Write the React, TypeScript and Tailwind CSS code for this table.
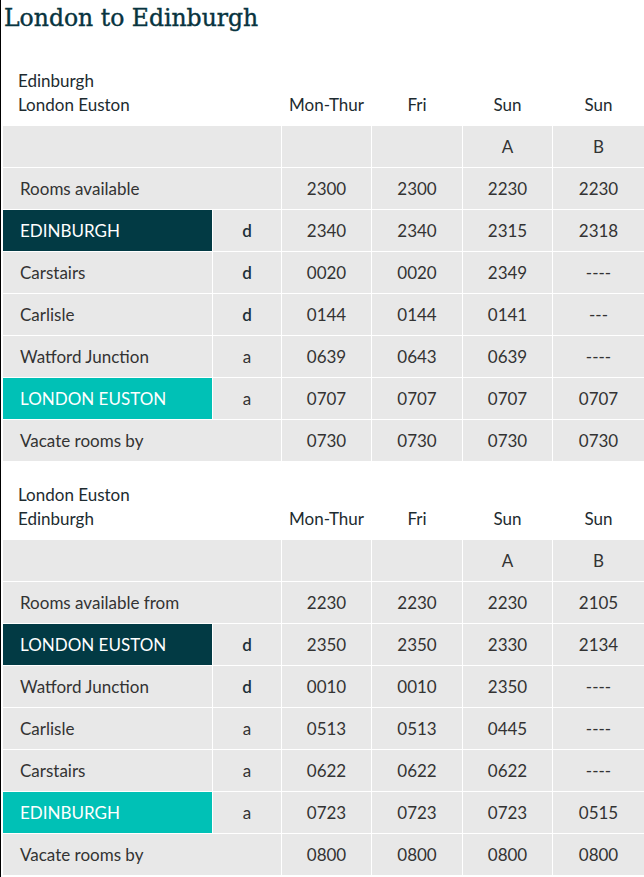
import React from "react";

type Row = {
  name: string;
  kind?: "dark" | "teal";
  code?: string;
  times: string[];
};

const SANS = "font-['Lato','Open_Sans',sans-serif]";

const northbound: Row[] = [
  { name: "Rooms available", times: ["2300", "2300", "2230", "2230"] },
  { name: "EDINBURGH", kind: "dark", code: "d", times: ["2340", "2340", "2315", "2318"] },
  { name: "Carstairs", code: "d", times: ["0020", "0020", "2349", "----"] },
  { name: "Carlisle", code: "d", times: ["0144", "0144", "0141", "---"] },
  { name: "Watford Junction", code: "a", times: ["0639", "0643", "0639", "----"] },
  { name: "LONDON EUSTON", kind: "teal", code: "a", times: ["0707", "0707", "0707", "0707"] },
  { name: "Vacate rooms by", times: ["0730", "0730", "0730", "0730"] },
];

const southbound: Row[] = [
  { name: "Rooms available from", times: ["2230", "2230", "2230", "2105"] },
  { name: "LONDON EUSTON", kind: "dark", code: "d", times: ["2350", "2350", "2330", "2134"] },
  { name: "Watford Junction", code: "d", times: ["0010", "0010", "2350", "----"] },
  { name: "Carlisle", code: "a", times: ["0513", "0513", "0445", "----"] },
  { name: "Carstairs", code: "a", times: ["0622", "0622", "0622", "----"] },
  { name: "EDINBURGH", kind: "teal", code: "a", times: ["0723", "0723", "0723", "0515"] },
  { name: "Vacate rooms by", times: ["0800", "0800", "0800", "0800"] },
];

const days = ["Mon-Thur", "Fri", "Sun", "Sun"];

function Timetable({ from, to, rows }: { from: string; to: string; rows: Row[] }) {
  return (
    <div className={`grid grid-cols-[209px_68px_89px_90px_89px_1fr] gap-px bg-white text-[17px] text-[#333] ${SANS}`}>
      {/* header */}
      <div className="col-span-2 pl-[15px] pb-2 leading-[24px] text-[#1d2b30]">
        <div>{from}</div>
        <div>{to}</div>
      </div>
      {days.map((d, i) => (
        <div key={i} className="flex items-end justify-center pb-2 leading-[24px] text-[#1d2b30]">
          {d}
        </div>
      ))}

      {/* A / B row */}
      <div className="col-span-2 h-[41px] bg-[#e8e8e8]" />
      <div className="bg-[#e8e8e8]" />
      <div className="bg-[#e8e8e8]" />
      <div className="flex items-center justify-center bg-[#e8e8e8]">A</div>
      <div className="flex items-center justify-center bg-[#e8e8e8]">B</div>

      {rows.map((r, i) => (
        <React.Fragment key={i}>
          {r.code ? (
            <>
              <div
                className={
                  r.kind === "dark"
                    ? "flex h-[41px] items-center bg-[#023a44] pl-[17px] text-white"
                    : r.kind === "teal"
                    ? "flex h-[41px] items-center bg-[#00c1b6] pl-[17px] text-white"
                    : "flex h-[41px] items-center bg-[#e8e8e8] pl-[17px]"
                }
              >
                {r.name}
              </div>
              <div
                className={
                  r.code === "d"
                    ? "flex items-center justify-center bg-[#e8e8e8] font-semibold text-[#1d3038]"
                    : "flex items-center justify-center bg-[#e8e8e8]"
                }
              >
                {r.code}
              </div>
            </>
          ) : (
            <div className="col-span-2 flex h-[41px] items-center bg-[#e8e8e8] pl-[17px]">{r.name}</div>
          )}
          {r.times.map((t, j) => (
            <div key={j} className="flex items-center justify-center bg-[#e8e8e8]">
              {t}
            </div>
          ))}
        </React.Fragment>
      ))}
    </div>
  );
}

export default function App() {
  return (
    <div className="min-h-[877px] w-[644px] border-l border-black bg-white pl-[2px]">
      <h1 className="pl-px font-['DejaVu_Serif',serif] text-[23.5px] leading-[36px] text-[#08343f] [-webkit-text-stroke:0.4px_#08343f]">
        London to Edinburgh
      </h1>
      <div className="mt-[33px]">
        <Timetable from="Edinburgh" to="London Euston" rows={northbound} />
      </div>
      <div className="mt-[22px]">
        <Timetable from="London Euston" to="Edinburgh" rows={southbound} />
      </div>
    </div>
  );
}
